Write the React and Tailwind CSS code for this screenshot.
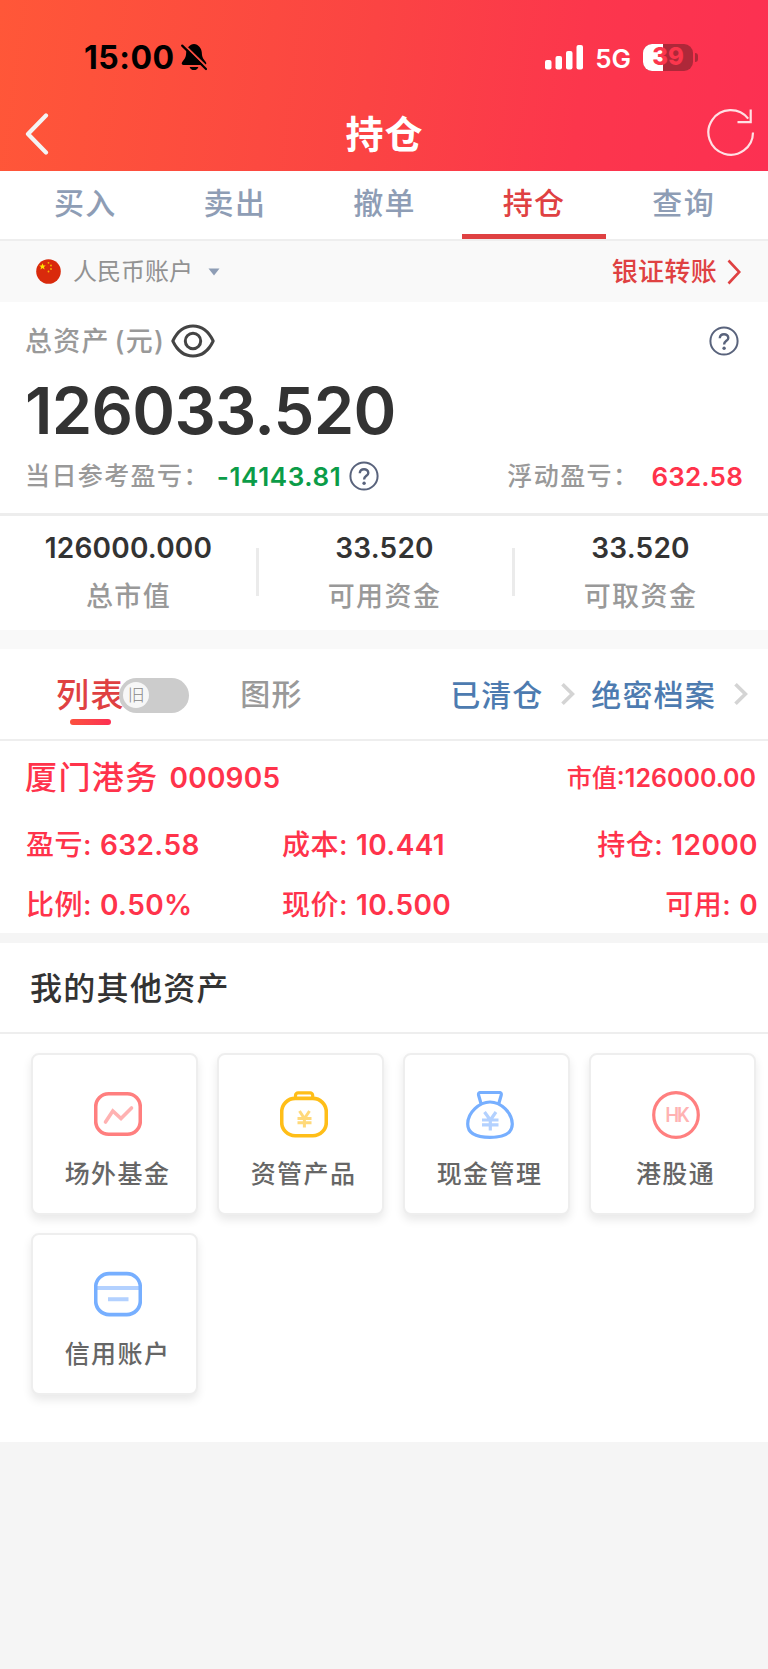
const tabs = ['买入', '卖出', '撤单', '持仓', '查询'];

const stats = [
  { label: '总市值', value: '126000.000' },
  { label: '可用资金', value: '33.520' },
  { label: '可取资金', value: '33.520' },
];

const holdingRows = [
  [
    { label: '盈亏', value: '632.58' },
    { label: '成本', value: '10.441' },
    { label: '持仓', value: '12000' },
  ],
  [
    { label: '比例', value: '0.50%' },
    { label: '现价', value: '10.500' },
    { label: '可用', value: '0' },
  ],
];

const assets = [
  { label: '场外基金', icon: FundIcon },
  { label: '资管产品', icon: ProductIcon },
  { label: '现金管理', icon: CashIcon },
  { label: '港股通', icon: HkIcon },
  { label: '信用账户', icon: CreditIcon },
];

function FundIcon() {
  return (
    <svg viewBox="0 0 48 48" className="size-12" fill="none" strokeLinecap="round">
      <rect x="1.7" y="2.7" width="44.6" height="40.6" rx="13" stroke="#ff7f7f" strokeWidth="3.6" />
      <path d="M11.5 31 18.8 20 27 27.5 37.5 17" stroke="#ffb2b2" strokeWidth="3.6" />
    </svg>
  );
}

function ProductIcon() {
  return (
    <svg viewBox="0 0 48 48" className="size-12" fill="none">
      <path d="M15.5 7.5V4.5a2.6 2.6 0 0 1 2.6-2.6h12a2.6 2.6 0 0 1 2.6 2.6v3" stroke="#ffbe18" strokeWidth="3.2" />
      <rect x="1.7" y="7.4" width="44.6" height="37.4" rx="13.5" stroke="#ffbe18" strokeWidth="3.6" />
      <path d="M19.5 20 24.4 27.5 29.5 20M24.4 26.5v10M17.5 27.5h14M17.5 31.8h14" stroke="#ffd97a" strokeWidth="3" />
    </svg>
  );
}

function CashIcon() {
  return (
    <svg viewBox="0 0 48 48" className="size-12" fill="none" strokeLinejoin="round">
      <path d="M15 12.5 12.6 4.2Q12 1.5 14.6 1.5H33.2Q35.8 1.5 35.2 4.2L32.8 12.5" stroke="#77afff" strokeWidth="3.2" />
      <path
        d="M24 11C13.5 11 1.7 21.5 1.7 33 1.7 43 12 46.3 24 46.3S46.3 43 46.3 33C46.3 21.5 34.5 11 24 11Z"
        stroke="#77afff"
        strokeWidth="3.2"
      />
      <path d="M18.5 21 24.3 29 30 21M24.3 28.5v11M16 29h16.5M16 33.8h16.5" stroke="#b3d1ff" strokeWidth="3.2" />
    </svg>
  );
}

function HkIcon() {
  return (
    <svg viewBox="0 0 48 48" className="size-12" fill="none">
      <circle cx="24" cy="24" r="22.3" stroke="#ff7f7f" strokeWidth="3.2" />
      <text x="13.2" y="31" fill="#ffb2b2" fontFamily="Roboto" fontSize="19.6" fontWeight="500" letterSpacing="-2.2">
        HK
      </text>
    </svg>
  );
}

function CreditIcon() {
  return (
    <svg viewBox="0 0 48 48" className="size-12" fill="none">
      <path d="M3 17h42M14 28.2h20.5" stroke="#b3d1ff" strokeWidth="4" />
      <rect x="1.7" y="2.6" width="44.6" height="41" rx="13.5" stroke="#77afff" strokeWidth="3.6" />
    </svg>
  );
}

function HelpIcon() {
  return (
    <svg viewBox="0 0 30 30" className="size-[30px] shrink-0" fill="none" stroke="#59637c">
      <circle cx="15" cy="15" r="13.6" strokeWidth="2" />
      <path d="M10.8 12.2C10.8 9.6 12.6 8.2 15 8.2S19.3 9.7 19.3 11.9C19.3 14.8 15.1 14.9 15.1 18.4" strokeWidth="2.4" />
      <circle cx="15.1" cy="22.2" r="1.7" fill="#59637c" stroke="none" />
    </svg>
  );
}

function Chevron() {
  return (
    <svg viewBox="0 0 14 24" className="h-6 w-3.5 shrink-0" fill="none" stroke="#d4d4d4" strokeWidth="3.6">
      <path d="M1.5 2.2 11.4 12 1.5 21.8" />
    </svg>
  );
}

function StatusBar() {
  return (
    <div className="flex h-[100px] items-center pt-[14px]">
      <span className="ml-[84px] w-[88px] pt-[2px] text-[32px] leading-none font-bold tracking-[0.5px] text-black">
        15:00
      </span>
      <svg viewBox="0 0 26 28" className="ml-[9px] h-7 w-[26px]">
        <path
          d="M13 1C8.7 1.4 5.5 5 5.2 9.5 5 14.5 3.500 16 1.400 18.800 0 20.800.8 22 2.600 22h20.800c1.800 0 2.600-1.200 1.200-3.200C22.500 16 21 14.500 20.800 9.500 20.500 5 17.300 1.400 13 1ZM8.600 24h8.800c-.6 2-2.200 3.100-4.400 3.100S9.200 26 8.600 24Z"
          fill="#000"
        />
        <path d="M2.2 1 27 25.2" stroke="#fb4e40" strokeWidth="2.2" />
        <path d="M1.2 2.6 25 26" stroke="#000" strokeWidth="2.2" strokeLinecap="round" />
      </svg>
      <svg viewBox="0 0 38 25" className="ml-auto h-[25px] w-[38px]" fill="#fff">
        <rect x="0" y="15" width="6.5" height="9.5" rx="2" />
        <rect x="10.5" y="11" width="6.5" height="13.5" rx="2" />
        <rect x="21" y="6" width="6.5" height="18.5" rx="2" />
        <rect x="31.5" y="0" width="6.5" height="24.5" rx="2" />
      </svg>
      <span className="ml-3 pt-[3px] text-[26px] leading-none font-semibold text-white">5G</span>
      <div className="relative ml-3 flex h-[27px] w-[50px] items-center justify-center overflow-hidden rounded-[9px] bg-[#ae2839]">
        <div className="absolute inset-y-0 left-0 w-5 bg-white" />
        <span className="relative text-[24px] leading-none font-extrabold text-[#fc364d]">39</span>
      </div>
      <div className="mr-[70px] ml-[2px] h-[9px] w-[3px] rounded-r-full bg-[#ae2839]" />
    </div>
  );
}

function Header() {
  return (
    <header className="h-[171px] bg-[linear-gradient(97deg,#ff5738_0%,#fb4443_48%,#fc364c_75%,#fc3052_100%)]">
      <StatusBar />
      <div className="flex h-[67px] items-center justify-between pr-[13px] pl-[25px]">
        <svg
          viewBox="0 0 24 42"
          className="mr-[13px] h-[42px] w-6"
          fill="none"
          stroke="#f4f4f4"
          strokeWidth="4.2"
          strokeLinecap="round"
          strokeLinejoin="round"
        >
          <path d="M21 2.5 3 21 21 39.5" />
        </svg>
        <h1 className="text-[38px] leading-none font-bold tracking-[1px] text-white">持仓</h1>
        <svg viewBox="0 0 48 48" className="mb-[3px] size-12" fill="none" stroke="#ffe0e4" strokeWidth="2.2">
          <path d="M46 24.5A22.3 22.3 0 1 1 41.2 10.6" />
          <path d="M43.7 1.500v12.600H30.500" />
        </svg>
      </div>
    </header>
  );
}

function TabBar() {
  return (
    <nav className="flex h-[70px] border-b-2 border-[#eee] bg-white px-[10px]">
      {tabs.map((tab) => (
        <div key={tab} className="flex flex-1 flex-col items-center">
          <span
            className={
              tab === '持仓'
                ? 'flex h-[63px] items-center pt-[2px] pl-[1px] text-[30px] font-medium tracking-[1.3px] text-[#df4142]'
                : 'flex h-[63px] items-center pt-[2px] pl-[1px] text-[30px] font-medium tracking-[1.3px] text-[#8e9db5]'
            }
          >
            {tab}
          </span>
          {tab === '持仓' && <div className="h-[5px] w-36 bg-[#df4142]" />}
        </div>
      ))}
    </nav>
  );
}

function AccountBar() {
  return (
    <section className="flex h-[61px] items-center bg-[#f9f9f9] pr-[27px] pl-9">
      <svg viewBox="0 0 25 25" className="size-[25px]">
        <circle cx="12.5" cy="12.5" r="12.3" fill="#d92a0c" />
        <path d="m6.5 4.2.9 2.3 2.4.1-1.9 1.5.7 2.3-2.1-1.3-2 1.3.6-2.3-1.9-1.5 2.4-.1Z" fill="#ffe600" />
        <g fill="#f5b800">
          <circle cx="12.5" cy="3.8" r=".9" />
          <circle cx="15" cy="6.5" r=".9" />
          <circle cx="15" cy="10" r=".9" />
          <circle cx="12.5" cy="12.5" r=".9" />
        </g>
      </svg>
      <span className="ml-3 text-[24px] leading-none text-[#929292]">人民币账户</span>
      <svg viewBox="0 0 12 8" className="ml-[15px] h-2 w-3" fill="#8e9db5">
        <path d="M.5.5h11L6 7.5Z" />
      </svg>
      <span className="ml-auto text-[26px] leading-none font-medium tracking-[0.3px] text-[#df4142]">银证转账</span>
      <svg viewBox="0 0 14 26" className="ml-[10px] h-[26px] w-3.5" fill="none" stroke="#df4142" strokeWidth="2.6">
        <path d="M1.5 1.5 12.3 13 1.5 24.5" />
      </svg>
    </section>
  );
}

function Summary() {
  return (
    <section className="h-[211px] bg-white pr-[26px] pl-[25px]">
      <div className="flex h-[78px] items-center">
        <span className="mt-[3px] text-[27px] font-medium tracking-[1.3px] text-[#999] [word-spacing:-4px]">
          总资产 (元)
        </span>
        <svg viewBox="0 0 44 34" className="ml-[6px] h-[34px] w-11" fill="none" stroke="#444" strokeWidth="3">
          <path
            d="M1.8 17C6.5 7 13.5 2 22 2s15.5 5 20.2 15C37.5 27 30.5 32 22 32S6.5 27 1.8 17Z"
            strokeLinejoin="round"
          />
          <circle cx="22" cy="17" r="7.7" />
        </svg>
        <div className="mr-[3px] ml-auto">
          <HelpIcon />
        </div>
      </div>
      <div className="flex h-[62px] items-center text-[65px] font-semibold tracking-[-0.75px] text-[#333]">126033.520</div>
      <div className="flex h-[68px] items-center text-[26px]">
        <span className="pt-[2px] text-[25px] font-medium tracking-[1.4px] text-[#999]">当日参考盈亏：</span>
        <span className="ml-[7px] font-semibold tracking-[0.6px] text-[#0b9c48]">-14143.81</span>
        <div className="ml-[8px]">
          <HelpIcon />
        </div>
        <span className="ml-auto pt-[2px] text-[25px] font-medium tracking-[1.4px] text-[#999]">浮动盈亏：</span>
        <span className="-mr-[1px] ml-3 font-semibold tracking-[0.2px] text-[#ff334b]">632.58</span>
      </div>
    </section>
  );
}

function Stats() {
  return (
    <section className="flex h-[117px] border-t-[3px] border-[#ededed] bg-white">
      {stats.map((item, index) => (
        <div key={item.label} className="relative flex-1 pt-[15px] pl-[1px] text-center">
          <p className="text-[28px] leading-[34px] font-semibold tracking-[0.2px] text-[#333]">{item.value}</p>
          <p className="mt-[14px] text-[27px] leading-[36px] font-medium tracking-[1.4px] text-[#999]">{item.label}</p>
          {index > 0 && <div className="absolute top-8 left-0 h-12 w-[3px] bg-[#ebebeb]" />}
        </div>
      ))}
    </section>
  );
}

function HoldingTabs() {
  return (
    <section className="flex h-[92px] items-center border-b-2 border-[#eee] bg-white pr-[20px] pl-[56px]">
      <div className="relative pt-[3px]">
        <span className="text-[33px] font-medium tracking-[1.6px] text-[#df4142]">列表</span>
        <div className="absolute -bottom-[5px] left-[14px] h-[6px] w-[41px] rounded-full bg-linear-to-r from-[#fb503e] to-[#fd2f52]" />
      </div>
      <div className="relative mt-[2px] -ml-[6px] flex h-[35px] w-[70px] items-center rounded-full bg-[#ccc] pl-1">
        <span className="flex size-[26px] items-center justify-center rounded-full bg-[#f7f7f7] pt-[2px] text-[17px] font-light text-[#888]">
          旧
        </span>
      </div>
      <span className="ml-[51px] text-[30px] font-medium tracking-[1.3px] text-[#999]">图形</span>
      <span className="mr-[18px] ml-auto pt-[2px] text-[30px] font-medium tracking-[1px] text-[#4d7bb0]">已清仓</span>
      <Chevron />
      <span className="mr-[18px] ml-4 pt-[2px] text-[30px] font-medium tracking-[1.2px] text-[#4d7bb0]">绝密档案</span>
      <Chevron />
    </section>
  );
}

function Holding() {
  return (
    <section className="h-[192px] bg-white font-medium text-[#ff334b]">
      <div className="flex h-[73px] items-center pr-3 pl-[25px]">
        <span className="text-[32px] tracking-[1.4px]">厦门港务</span>
        <span className="ml-[11px] text-[28px] font-semibold tracking-[0.2px]">000905</span>
        <span className="ml-auto pt-[2px] text-[25px]">
          市值<span className="font-semibold">:126000.00</span>
        </span>
      </div>
      {holdingRows.map((row) => (
        <div key={row[0].label} className="grid h-[60px] grid-cols-3 items-center pt-[1px] text-[28px]">
          {row.map((cell) => (
            <span key={cell.label} className="pr-[10px] pl-[26px] last:text-right">
              <span className="tracking-[0.5px]">{cell.label}: </span>
              <span className="font-semibold tracking-[0.4px]">{cell.value}</span>
            </span>
          ))}
        </div>
      ))}
    </section>
  );
}

function OtherAssets() {
  return (
    <section className="h-[499px] bg-white">
      <h2 className="flex h-[91px] items-center border-b-2 border-[#eee] pt-[3px] pl-[30px] text-[32px] font-medium tracking-[1.3px] text-[#333]">
        我的其他资产
      </h2>
      <div className="grid grid-cols-4 gap-x-[19px] gap-y-[18px] pt-[19px] pr-[12px] pl-[31px]">
        {assets.map(({ label, icon: Icon }) => (
          <div
            key={label}
            className="flex h-[162px] flex-col items-center rounded-lg border-2 border-[#eee] bg-white pt-[36px] pl-1.5 shadow-[0_5px_10px_rgba(0,0,0,0.09)]"
          >
            <Icon />
            <span className="mt-[17px] text-[25px] leading-[36px] font-medium tracking-[1.4px] text-[#666]">{label}</span>
          </div>
        ))}
      </div>
    </section>
  );
}

export default function App() {
  return (
    <div className="flex min-h-screen w-full flex-col bg-[#f5f5f5] font-['Inter','Noto_Sans_CJK_SC',sans-serif]">
      <Header />
      <TabBar />
      <AccountBar />
      <Summary />
      <Stats />
      <div className="h-[19px] bg-[#f9f9f9]" />
      <HoldingTabs />
      <Holding />
      <div className="h-[10px]" />
      <OtherAssets />
    </div>
  );
}
